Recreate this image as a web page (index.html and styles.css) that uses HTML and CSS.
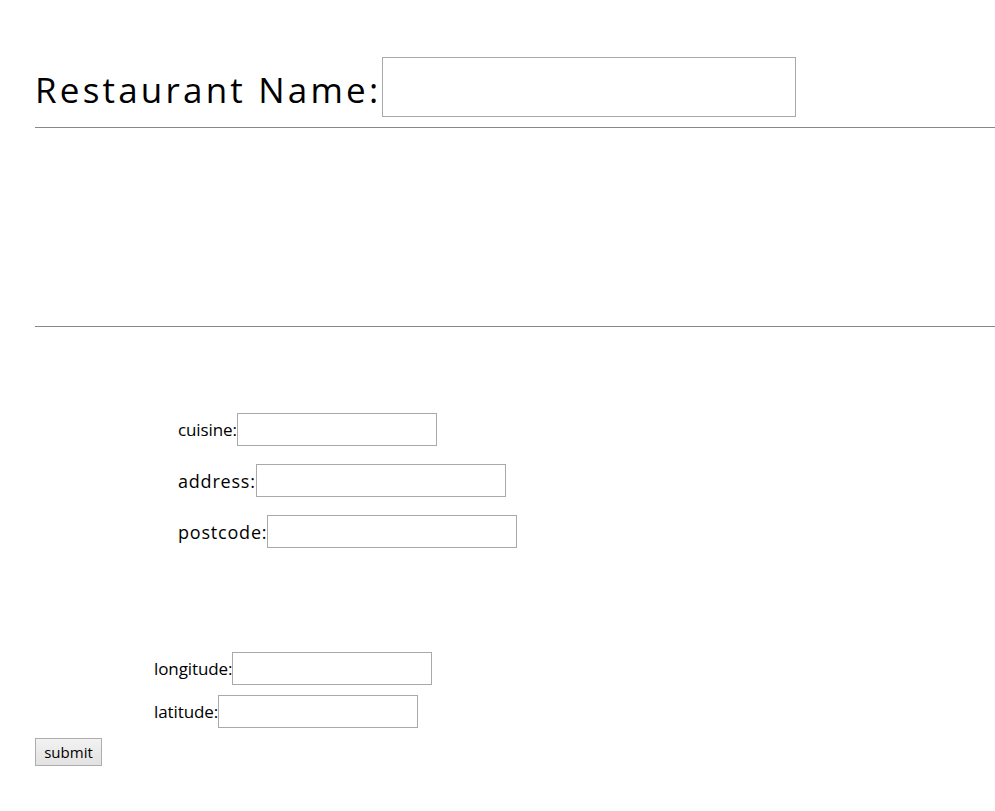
FILE: index.html
```html
<!DOCTYPE html>
<html>
<head>
<meta charset="utf-8">
<link rel="stylesheet" href="styles.css">
</head>
<body>
<form class="page">
  <div class="title-row">
    <label class="title">Restaurant Name:</label><input class="field field-title" type="text">
  </div>
  <hr class="rule">
  <div class="blank"></div>
  <hr class="rule">
  <div class="details">
    <div class="row"><label class="lbl">cuisine:</label><input class="field" type="text"></div>
    <div class="row"><label class="lbl lbl-wide">address:</label><input class="field field-long" type="text"></div>
    <div class="row"><label class="lbl lbl-wide">postcode:</label><input class="field field-long" type="text"></div>
  </div>
  <div class="coords">
    <div class="row2"><label class="lbl">longitude:</label><input class="field" type="text"></div>
    <div class="row2"><label class="lbl">latitude:</label><input class="field" type="text"></div>
  </div>
  <button class="submit" type="button">submit</button>
</form>
</body>
</html>
```
FILE: styles.css
```css
html, body {
  margin: 0;
  padding: 0;
  background: #fff;
}
body {
  font-family: "Open Sans", "Noto Sans", sans-serif;
  color: #000;
}
.page {
  padding-left: 35px;
  display: flex;
  flex-direction: column;
  align-items: flex-start;
}
.title-row {
  display: flex;
  align-items: flex-end;
  margin-top: 57px;
  height: 60px;
}
.title {
  font-size: 35px;
  letter-spacing: 3.2px;
  line-height: 1;
  padding-bottom: 10px;
}
.field {
  box-sizing: border-box;
  width: 200px;
  height: 33px;
  border: 1px solid #a9a9a9;
  margin: 0;
  padding: 2px 4px;
  background: #fff;
}
.field-title {
  width: 414px;
  height: 60px;
  margin-left: 1px;
}
.field-long {
  width: 250px;
}
.rule {
  align-self: stretch;
  border: 0;
  border-top: 1px solid #888;
  margin: 10px 0 0 0;
  height: 0;
}
.blank {
  height: 188px;
}
.details {
  display: flex;
  flex-direction: column;
  gap: 18px;
  padding-left: 143px;
  margin-top: 86px;
}
.row, .row2 {
  display: flex;
  align-items: center;
}
.lbl {
  font-size: 17px;
  letter-spacing: -0.1px;
}
.lbl-wide {
  font-size: 18px;
  letter-spacing: 0.8px;
}
.coords {
  display: flex;
  flex-direction: column;
  gap: 10px;
  padding-left: 119px;
  margin-top: 104px;
}
.submit {
  margin-top: 10px;
  width: 67px;
  height: 28px;
  font-family: "Open Sans", "Noto Sans", sans-serif;
  font-size: 15px;
  padding: 0 4px;
  border: 1px solid #adadad;
  border-radius: 0;
  background: linear-gradient(#f2f2f2, #e2e2e2);
  color: #000;
}
```
